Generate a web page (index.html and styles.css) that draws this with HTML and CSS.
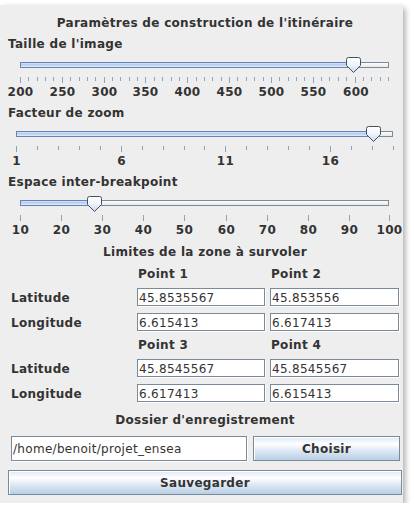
FILE: index.html
```html
<!DOCTYPE html>
<html lang="fr">
<head>
<meta charset="utf-8">
<title>Paramètres de construction de l'itinéraire</title>
<link rel="stylesheet" href="styles.css">
</head>
<body>
<div class="window">
  <div class="heading">Paramètres de construction de l'itinéraire</div>

  <div class="sliders">
    <section class="slider-section">
      <div class="section-label">Taille de l'image</div>
      <svg class="slider" width="403" height="55" viewBox="0 0 403 55">
        <defs>
          <linearGradient id="trackFill" x1="0" y1="0" x2="0" y2="1">
            <stop offset="0" stop-color="#e4edf8"/>
            <stop offset="0.45" stop-color="#b3cae6"/>
            <stop offset="1" stop-color="#f4f8fc"/>
          </linearGradient>
          <linearGradient id="trackEmpty" x1="0" y1="0" x2="0" y2="1">
            <stop offset="0" stop-color="#ffffff"/>
            <stop offset="1" stop-color="#e6e6e6"/>
          </linearGradient>
          <linearGradient id="thumbFill" x1="0" y1="0" x2="0" y2="1">
            <stop offset="0" stop-color="#ffffff"/>
            <stop offset="0.5" stop-color="#eef4fb"/>
            <stop offset="1" stop-color="#c4d7ee"/>
          </linearGradient>
        </defs>
        <rect class="track-empty" x="20.5" y="11.5" width="368" height="5"/>
        <rect class="track-fill" x="20.5" y="11.5" width="332" height="5"/>
        <path class="ticks" d="M20.5 26v6M62.5 26v6M104.5 26v6M145.5 26v6M187.5 26v6M229.5 26v6M271.5 26v6M313.5 26v6M355.5 26v6M28.5 26v4M37.5 26v4M45.5 26v4M53.5 26v4M70.5 26v4M79.5 26v4M87.5 26v4M95.5 26v4M112.5 26v4M120.5 26v4M129.5 26v4M137.5 26v4M154.5 26v4M162.5 26v4M171.5 26v4M179.5 26v4M196.5 26v4M204.5 26v4M212.5 26v4M221.5 26v4M237.5 26v4M246.5 26v4M254.5 26v4M263.5 26v4M279.5 26v4M288.5 26v4M296.5 26v4M304.5 26v4M321.5 26v4M329.5 26v4M338.5 26v4M346.5 26v4M363.5 26v4M371.5 26v4M380.5 26v4M388.5 26v4"/>
        <g class="tick-labels">
          <text x="20.5" y="45">200</text>
          <text x="62.5" y="45">250</text>
          <text x="104.5" y="45">300</text>
          <text x="145.5" y="45">350</text>
          <text x="187.5" y="45">400</text>
          <text x="229.5" y="45">450</text>
          <text x="271.5" y="45">500</text>
          <text x="313.5" y="45">550</text>
          <text x="356" y="45">600</text>
        </g>
        <path class="thumb" transform="translate(346 6)" d="M0.5 2.5Q0.5 0.5 2.5 0.5H12.5Q14.5 0.5 14.5 2.5V8.5L7.5 15.5L0.5 8.5Z"/>
      </svg>
    </section>

    <section class="slider-section">
      <div class="section-label">Facteur de zoom</div>
      <svg class="slider" width="403" height="55" viewBox="0 0 403 55">
        <rect class="track-empty" x="16.5" y="11.5" width="376" height="5"/>
        <rect class="track-fill" x="16.5" y="11.5" width="357" height="5"/>
        <path class="ticks" d="M16.5 26v6M121.5 26v6M225.5 26v6M330.5 26v6M37.5 26v4M58.5 26v4M79.5 26v4M100.5 26v4M142.5 26v4M163.5 26v4M184.5 26v4M204.5 26v4M246.5 26v4M267.5 26v4M288.5 26v4M309.5 26v4M351.5 26v4M372.5 26v4M393.5 26v4"/>
        <g class="tick-labels">
          <text x="16.5" y="45">1</text>
          <text x="121.5" y="45">6</text>
          <text x="225.5" y="45">11</text>
          <text x="330.5" y="45">16</text>
        </g>
        <path class="thumb" transform="translate(366 6)" d="M0.5 2.5Q0.5 0.5 2.5 0.5H12.5Q14.5 0.5 14.5 2.5V8.5L7.5 15.5L0.5 8.5Z"/>
      </svg>
    </section>

    <section class="slider-section">
      <div class="section-label">Espace inter-breakpoint</div>
      <svg class="slider" width="403" height="55" viewBox="0 0 403 55">
        <rect class="track-empty" x="20.5" y="11.5" width="368" height="5"/>
        <rect class="track-fill" x="20.5" y="11.5" width="74" height="5"/>
        <path class="ticks" d="M20.5 26v6M61.5 26v6M102.5 26v6M143.5 26v6M184.5 26v6M226.5 26v6M267.5 26v6M308.5 26v6M349.5 26v6M389.5 26v6"/>
        <g class="tick-labels">
          <text x="20.5" y="45">10</text>
          <text x="61.5" y="45">20</text>
          <text x="102.5" y="45">30</text>
          <text x="143.5" y="45">40</text>
          <text x="184.5" y="45">50</text>
          <text x="226.5" y="45">60</text>
          <text x="267.5" y="45">70</text>
          <text x="308.5" y="45">80</text>
          <text x="349.5" y="45">90</text>
          <text x="389.5" y="45">100</text>
        </g>
        <path class="thumb" transform="translate(87 7)" d="M0.5 2.5Q0.5 0.5 2.5 0.5H12.5Q14.5 0.5 14.5 2.5V8.5L7.5 15.5L0.5 8.5Z"/>
      </svg>
    </section>
  </div>

  <div class="heading zone-heading">Limites de la zone à survoler</div>

  <div class="coords">
    <div></div>
    <div class="point">Point 1</div>
    <div class="point">Point 2</div>

    <div class="row-label">Latitude</div>
    <div class="field">45.8535567</div>
    <div class="field">45.853556</div>

    <div class="row-label">Longitude</div>
    <div class="field">6.615413</div>
    <div class="field">6.617413</div>

    <div></div>
    <div class="point">Point 3</div>
    <div class="point">Point 4</div>

    <div class="row-label">Latitude</div>
    <div class="field">45.8545567</div>
    <div class="field">45.8545567</div>

    <div class="row-label">Longitude</div>
    <div class="field">6.617413</div>
    <div class="field">6.615413</div>
  </div>

  <div class="heading folder-heading">Dossier d'enregistrement</div>

  <div class="folder-row">
    <div class="field path-field">/home/benoit/projet_ensea</div>
    <div class="button choose">Choisir</div>
  </div>

  <div class="button save">Sauvegarder</div>
</div>
</body>
</html>
```

FILE: styles.css
```css
* {
  box-sizing: border-box;
}

html,
body {
  margin: 0;
  padding: 0;
  background: #ffffff;
}

body {
  font-family: "DejaVu Sans", "Noto Sans", sans-serif;
  font-size: 12px;
  line-height: 14px;
  font-weight: bold;
  letter-spacing: 0.3px;
  color: #333333;
}

.window {
  width: 403px;
  height: 498px;
  margin-top: 5px;
  padding-top: 11px;
  background: #eeeeee;
  box-shadow: 2px 3px 6px rgba(0, 0, 0, 0.35);
  display: flex;
  flex-direction: column;
}

.heading {
  height: 14px;
  padding-left: 7px;
  text-align: center;
  white-space: nowrap;
}

.sliders {
  margin-top: 7px;
  display: flex;
  flex-direction: column;
}

.slider-section {
  display: flex;
  flex-direction: column;
}

.section-label {
  height: 14px;
  padding-left: 8px;
  white-space: nowrap;
}

.slider {
  display: block;
  width: 403px;
  height: 55px;
}

.track-empty {
  fill: url(#trackEmpty);
  stroke: #7a8a99;
  stroke-width: 1;
}

.track-fill {
  fill: url(#trackFill);
  stroke: #6382bf;
  stroke-width: 1;
}

.ticks {
  stroke: #8fa3bc;
  stroke-width: 1;
  fill: none;
}

.tick-labels text {
  font-family: "DejaVu Sans", sans-serif;
  font-size: 12px;
  font-weight: bold;
  letter-spacing: 0.3px;
  fill: #333333;
  text-anchor: middle;
}

.thumb {
  fill: url(#thumbFill);
  stroke: #46505c;
  stroke-width: 1;
}

.zone-heading {
  margin-top: 1px;
}

.coords {
  display: grid;
  grid-template-columns: 121px 128px 129px;
  grid-template-rows: 14px 18px 18px 14px 18px 18px;
  column-gap: 5px;
  row-gap: 7px;
  padding-left: 11px;
  margin-top: 8px;
}

.point {
  padding-left: 1px;
  white-space: nowrap;
}

.row-label {
  padding-top: 3px;
  white-space: nowrap;
}

.field {
  height: 18px;
  padding: 2px 0 0 1px;
  border: 1px solid #7a8a99;
  background: #ffffff;
  box-shadow: 1px 1px 0 #ffffff;
  font-weight: normal;
  white-space: nowrap;
  overflow: hidden;
}

.folder-heading {
  margin-top: 11px;
}

.folder-row {
  display: flex;
  gap: 6px;
  margin-top: 9px;
  padding-left: 11px;
}

.path-field {
  width: 236px;
  height: 25px;
  padding: 0 0 0 1px;
  display: flex;
  align-items: center;
}

.button {
  height: 25px;
  border: 1px solid #7a8a99;
  background: linear-gradient(to bottom, #dde8f3 0%, #ffffff 30%, #dde8f3 60%, #b8cfe5 100%);
  box-shadow: inset 1px 1px 0 #ffffff;
  display: flex;
  align-items: center;
  justify-content: center;
  white-space: nowrap;
}

.choose {
  width: 147px;
}

.save {
  width: 394px;
  margin-top: 9px;
  margin-left: 8px;
}
```
